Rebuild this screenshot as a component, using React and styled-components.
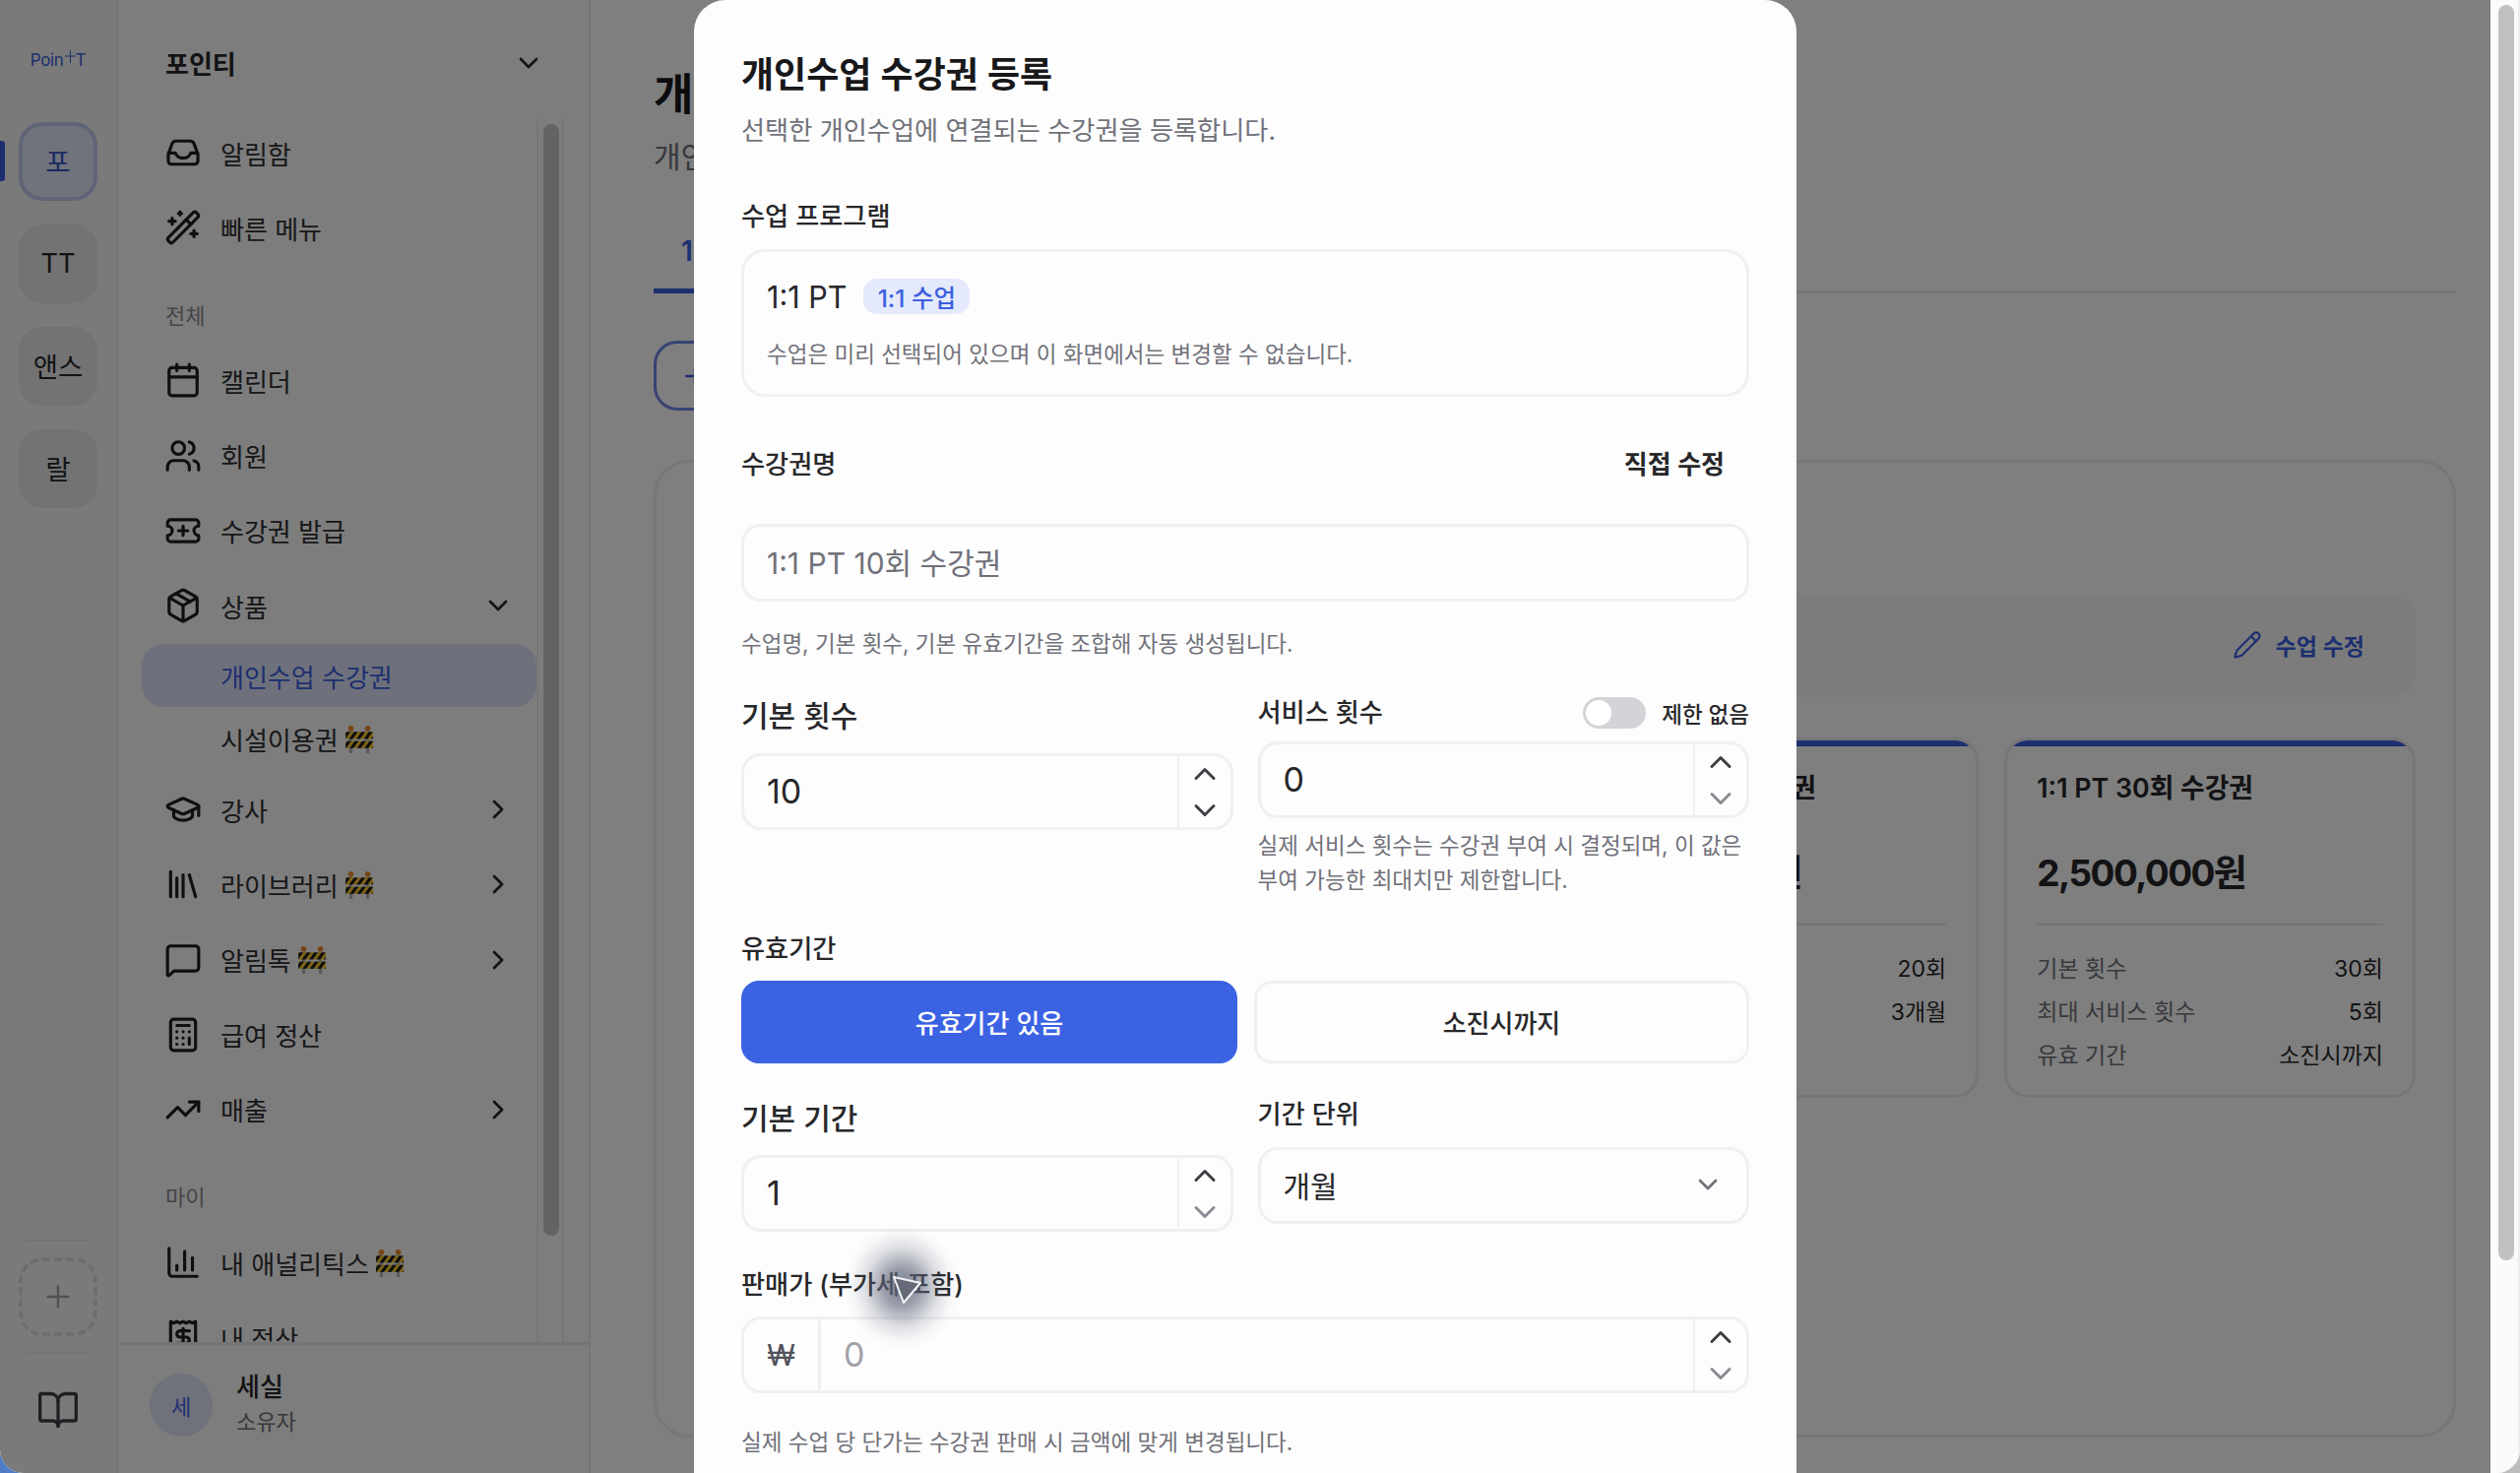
import React from "react";
import styled, { createGlobalStyle } from "styled-components";
import {
  BookOpen,
  Calculator,
  Calendar,
  ChartColumn,
  ChevronDown,
  ChevronRight,
  ChevronUp,
  GraduationCap,
  Library,
  MessageSquare,
  Package,
  Pencil,
  Plus,
  Receipt,
  TicketPlus,
  TrendingUp,
  Users,
  WandSparkles,
} from "lucide-react";

const GlobalStyle = createGlobalStyle`
  html, body {
    margin: 0;
    padding: 0;
    height: 1496px;
    overflow: hidden;
    background: linear-gradient(90deg, #4f7cc4 0 50%, #bdbdbd 50% 100%);
  }
  * { box-sizing: border-box; }
  body {
    font-family: Inter, "Noto Sans CJK KR", sans-serif;
    color: #27272a;
  }
`;

const Window = styled.div`
  position: relative;
  display: flex;
  width: 2560px;
  height: 1496px;
  overflow: hidden;
  border-radius: 0 0 24px 24px;
  background: #fff;
`;

/* rail */
const Rail = styled.div`
  width: 120px;
  flex-shrink: 0;
  background: #f4f4f5;
  border-right: 2px solid #ebebed;
  display: flex;
  flex-direction: column;
  align-items: center;
  position: relative;
`;
const Logo = styled.div`
  height: 124px;
  padding-bottom: 2px;
  display: flex;
  align-items: center;
  font-size: 17px;
  letter-spacing: -0.3px;
  color: #3b5fe0;
`;
const LogoPlus = styled.svg`
  width: 11px;
  height: 13px;
  margin: -8px 0 0 1px;
`;
const Tiles = styled.div`
  display: flex;
  flex-direction: column;
  gap: 24px;
`;
const Tile = styled.div`
  width: 80px;
  height: 80px;
  padding-bottom: 2px;
  border-radius: 24px;
  display: flex;
  align-items: center;
  justify-content: center;
  font-size: 27.5px;
  background: ${(p) => (p.$active ? "#e2e6f8" : "#e6e6e8")};
  border: ${(p) => (p.$active ? "4px solid #c1c9ee" : "none")};
  color: ${(p) => (p.$active ? "#3552c4" : "#27272a")};
`;
const RailMarker = styled.div`
  position: absolute;
  left: 0;
  top: 143px;
  width: 5px;
  height: 41px;
  background: #3b5fe0;
  border-radius: 0 3px 3px 0;
`;
const RailBottom = styled.div`
  margin-top: auto;
  display: flex;
  flex-direction: column;
  align-items: center;
`;
const RailRule = styled.div`
  width: 64px;
  height: 2px;
  background: #e6e6e8;
`;
const AddTile = styled.div`
  width: 80px;
  height: 80px;
  margin: 16px 0;
  border-radius: 24px;
  border: 4px dashed #dcdcde;
  display: flex;
  align-items: center;
  justify-content: center;
  color: #a1a1aa;
`;
const BookSlot = styled.div`
  height: 121px;
  padding-bottom: 8px;
  display: flex;
  align-items: center;
  color: #3f3f46;
`;

/* sidebar */
const Sidebar = styled.div`
  width: 480px;
  flex-shrink: 0;
  background: #fafafa;
  border-right: 2px solid #ebebed;
  display: flex;
  flex-direction: column;
  height: 100%;
`;
const SidebarHead = styled.div`
  height: 117px;
  flex-shrink: 0;
  padding: 10px 45px 0 48px;
  display: flex;
  align-items: center;
  justify-content: space-between;
  font-size: 26px;
  font-weight: 600;
`;
const SidebarBody = styled.div`
  flex: 1;
  min-height: 0;
  display: flex;
  padding-right: 25px;
`;
const MenuList = styled.div`
  flex: 1;
  min-width: 0;
  margin-left: 24px;
  overflow: hidden;
`;
const MenuItem = styled.div`
  height: 76.2px;
  display: flex;
  align-items: center;
  padding: 0 23px;
  font-size: 26px;
  color: #2f2f33;
`;
const MenuIcon = styled.span`
  width: 38px;
  height: 38px;
  margin-right: 19px;
  flex-shrink: 0;
  color: #1f1f23;
`;
const MenuLabel = styled.span`
  display: flex;
  align-items: center;
  gap: 6px;
  flex: 1;
`;
const SectionLabel = styled.div`
  font-size: 22px;
  line-height: 30px;
  color: #8a8a90;
  padding-left: 24px;
  margin: ${(p) => p.$margin};
`;
const SubList = styled.div`
  margin: 1px 0 2px;
`;
const SubItem = styled.div`
  height: 64px;
  display: flex;
  align-items: center;
  gap: 6px;
  padding-left: 80px;
  font-size: 26px;
  border-radius: 22px;
  background: ${(p) => (p.$active ? "#dde2f8" : "transparent")};
  color: ${(p) => (p.$active ? "#3b5fe0" : "#2f2f33")};
`;
const Track = styled.div`
  width: 28px;
  flex-shrink: 0;
  margin-top: 3px;
  padding: 6px 5px 0;
  border-left: 2px solid #efeff0;
  border-right: 2px solid #efeff0;
`;
const Thumb = styled.div`
  height: 1129px;
  width: 16px;
  border-radius: 8px;
  background: #c6c6c6;
`;
const SidebarFoot = styled.div`
  height: 133px;
  flex-shrink: 0;
  border-top: 3px solid #e8e8ea;
  padding: 0 0 8px 32px;
  display: flex;
  align-items: center;
  gap: 24px;
`;
const Avatar = styled.div`
  width: 64px;
  height: 64px;
  border-radius: 50%;
  background: #dfe3f6;
  color: #3b5fe0;
  display: flex;
  align-items: center;
  justify-content: center;
  font-size: 22px;
`;
const UserName = styled.div`
  font-size: 26px;
  line-height: 36px;
  font-weight: 500;
  margin-top: -2px;
`;
const UserRole = styled.div`
  font-size: 22px;
  line-height: 34px;
  color: #71717a;
`;

/* page behind the dialog */
const Main = styled.div`
  flex: 1;
  min-width: 0;
  padding: 66px 35px 0 64px;
  background: #fff;
`;
const PageTitle = styled.div`
  font-size: 44px;
  line-height: 60px;
  font-weight: 700;
  color: #18181b;
`;
const PageSub = styled.div`
  margin-top: 13px;
  font-size: 30px;
  line-height: 40px;
  color: #71717a;
`;
const Tabs = styled.div`
  margin-top: 39px;
  height: 80px;
  border-bottom: 3px solid #eeeeef;
  display: flex;
`;
const Tab = styled.div`
  height: 80px;
  padding: 0 32px 6px 28px;
  border-bottom: 5px solid #3b5fe0;
  display: flex;
  align-items: center;
  font-size: 28px;
  font-weight: 600;
  color: #3b5fe0;
`;
const AddButton = styled.div`
  margin-top: 48px;
  width: 240px;
  height: 71px;
  border: 3px solid #6d86e8;
  border-radius: 24px;
  padding-left: 24px;
  display: flex;
  align-items: center;
  gap: 10px;
  font-size: 26px;
  color: #3b5fe0;
`;
const ProgramCard = styled.div`
  margin-top: 50px;
  height: 993px;
  border: 3px solid #eeeeef;
  border-radius: 36px;
  padding: 134px 38px 0;
`;
const ProgramBar = styled.div`
  height: 104px;
  border-radius: 24px;
  background: #f9f9f9;
  padding: 0 52px 2px 0;
  display: flex;
  align-items: center;
  justify-content: flex-end;
  gap: 14px;
  font-size: 23px;
  font-weight: 600;
  color: #3b5fe0;
`;
const PassGrid = styled.div`
  margin-top: 41px;
  display: grid;
  grid-template-columns: repeat(4, 1fr);
  gap: 26px;
`;
const PassCard = styled.div`
  height: 366px;
  border: 3px solid #ededef;
  border-radius: 24px;
  overflow: hidden;
  padding: 0 30px;
  position: relative;
  &::before {
    content: "";
    position: absolute;
    left: 0;
    right: 0;
    top: 0;
    height: 6px;
    background: #3b5fe0;
  }
`;
const PassName = styled.div`
  margin-top: 30px;
  font-size: 26.8px;
  line-height: 36px;
  font-weight: 600;
  white-space: nowrap;
`;
const PassPrice = styled.div`
  margin-top: 43px;
  font-size: 37px;
  line-height: 52px;
  font-weight: 700;
  letter-spacing: -1.6px;
  white-space: nowrap;
`;
const PassDivider = styled.div`
  margin-top: 25px;
  height: 2px;
  background: #e8e8ea;
`;
const PassRows = styled.div`
  margin-top: 20px;
`;
const PassRow = styled.div`
  height: 44px;
  display: flex;
  align-items: center;
  justify-content: space-between;
  font-size: 23px;
`;
const PassKey = styled.span`
  color: #71717a;
`;

const PageScroll = styled.div`
  width: 30px;
  flex-shrink: 0;
  background: #fafafa;
  padding: 5px 6px 0 8px;
  border-left: 2px solid #fff;
  border-right: 2px solid #ececec;
  position: relative;
  z-index: 5;
`;
const PageThumb = styled.div`
  height: 1275px;
  width: 16px;
  margin-left: -2px;
  border-radius: 8px;
  background: #c1c1c1;
`;

/* dialog */
const Dim = styled.div`
  position: absolute;
  left: 0;
  top: 0;
  bottom: 0;
  right: 30px;
  background: rgba(0, 0, 0, 0.5);
`;
const Modal = styled.div`
  position: absolute;
  left: 705px;
  top: 0;
  width: 1120px;
  height: 1600px;
  background: #fdfdfd;
  border-radius: 32px 32px 0 0;
  padding: 51px 48px 0;
`;
const ModalTitle = styled.div`
  font-size: 36px;
  line-height: 50px;
  font-weight: 600;
  color: #18181b;
`;
const ModalSub = styled.div`
  margin-top: 14px;
  font-size: 26.2px;
  line-height: 36px;
  color: #71717a;
`;
const Label = styled.div`
  font-size: ${(p) => (p.$large ? "30px" : "26.2px")};
  line-height: ${(p) => p.$lh || "36px"};
  font-weight: 500;
  color: #27272a;
  margin-top: ${(p) => p.$top || "0"};
`;
const ProgramBox = styled.div`
  margin-top: 15px;
  height: 150px;
  border: 3px solid #f0f0f4;
  border-radius: 24px;
  padding: 27px 23px 0;
`;
const ProgramRow = styled.div`
  height: 36px;
  display: flex;
  align-items: center;
  gap: 17px;
  font-size: 30.5px;
`;
const Badge = styled.span`
  width: 108px;
  height: 36px;
  border-radius: 14px;
  background: #e4e9fb;
  color: #3b5fe0;
  font-size: 24.5px;
  font-weight: 500;
  display: flex;
  align-items: center;
  justify-content: center;
`;
const Hint = styled.div`
  margin-top: ${(p) => p.$top || "0"};
  font-size: 22.5px;
  line-height: ${(p) => p.$lh || "34px"};
  color: #71717a;
`;
const NameRow = styled.div`
  margin-top: 51px;
  display: flex;
  justify-content: space-between;
  padding-right: 25px;
`;
const LinkText = styled.span`
  font-size: 26px;
  line-height: 36px;
  font-weight: 600;
`;
const TextBox = styled.div`
  margin-top: ${(p) => p.$top || "0"};
  height: ${(p) => p.$h || "78px"};
  border: 3px solid #f0f0f4;
  border-radius: 20px;
  padding: 0 23px 3px;
  display: flex;
  align-items: center;
  justify-content: space-between;
  font-size: 30px;
  color: ${(p) => p.$color || "#27272a"};
`;
const Columns = styled.div`
  margin-top: ${(p) => p.$top};
  display: grid;
  grid-template-columns: 1fr 1fr;
  column-gap: 25px;
  align-items: start;
`;
const ToggleRow = styled.div`
  height: 34px;
  display: flex;
  align-items: center;
  justify-content: space-between;
`;
const ToggleWrap = styled.div`
  display: flex;
  align-items: center;
  gap: 16px;
  font-size: 22.5px;
  font-weight: 500;
`;
const Toggle = styled.div`
  width: 64px;
  height: 32px;
  border-radius: 16px;
  background: #d4d4d8;
  padding: 3px;
`;
const Knob = styled.div`
  width: 26px;
  height: 26px;
  border-radius: 50%;
  background: #fff;
`;
const NumberBox = styled.div`
  margin-top: ${(p) => p.$top};
  height: 78px;
  border: 3px solid #f0f0f4;
  border-radius: 20px;
  display: flex;
  overflow: hidden;
`;
const CurrencyCell = styled.div`
  width: 78px;
  flex-shrink: 0;
  border-right: 3px solid #f0f0f4;
  display: flex;
  align-items: center;
  justify-content: center;
  font-size: 30px;
  color: #52525b;
`;
const NumberValue = styled.div`
  flex: 1;
  min-width: 0;
  padding: 0 0 2px 23px;
  display: flex;
  align-items: center;
  font-size: 34px;
  color: ${(p) => (p.$placeholder ? "#a1a1aa" : "#27272a")};
`;
const Stepper = styled.div`
  width: 54px;
  flex-shrink: 0;
  border-left: 2px solid #f0f0f4;
  display: flex;
  flex-direction: column;
  align-items: center;
  justify-content: center;
  gap: 1px;
`;
const StepIcon = styled.span`
  height: 36px;
  color: ${(p) => (p.$muted ? "#8b8b93" : "#3f3f46")};
`;
const ChoiceRow = styled.div`
  margin-top: 14px;
  display: grid;
  grid-template-columns: 504px 1fr;
  gap: 17px;
`;
const Choice = styled.div`
  height: 84px;
  padding-bottom: 2px;
  border-radius: 18px;
  display: flex;
  align-items: center;
  justify-content: center;
  font-size: 26px;
  font-weight: 500;
  background: ${(p) => (p.$on ? "#3b62e3" : "#fdfdfd")};
  color: ${(p) => (p.$on ? "#fff" : "#27272a")};
  border: ${(p) => (p.$on ? "none" : "3px solid #f0f0f4")};
`;
const SelectArrow = styled.span`
  height: 32px;
  color: #71717a;
`;
const CursorHalo = styled.div`
  position: absolute;
  left: 151px;
  top: 1242px;
  width: 120px;
  height: 130px;
  border-radius: 50%;
  background: radial-gradient(closest-side, rgba(95, 102, 122, 0.85) 0%, rgba(95, 102, 122, 0.62) 30%, rgba(95, 102, 122, 0.2) 62%, rgba(95, 102, 122, 0.04) 85%, rgba(95, 102, 122, 0) 100%);
`;
const CursorArrow = styled.svg`
  position: absolute;
  left: 200px;
  top: 1292px;
  width: 34px;
  height: 34px;
`;

const Barrier = () => (
  <svg width="30" height="29" viewBox="0 0 28 28" preserveAspectRatio="none">
    <defs>
      <pattern id="hazard" width="7" height="7" patternUnits="userSpaceOnUse" patternTransform="skewX(-35)">
        <rect width="7" height="7" fill="#f6c52c" />
        <rect width="3.5" height="7" fill="#1c1c1c" />
      </pattern>
    </defs>
    <rect x="4.5" y="6" width="3" height="22" fill="#b4b4b4" />
    <rect x="20.5" y="6" width="3" height="22" fill="#b4b4b4" />
    <circle cx="6" cy="3.5" r="2.6" fill="#ef8a24" />
    <circle cx="22" cy="3.5" r="2.6" fill="#ef8a24" />
    <rect x="1" y="7" width="26" height="7" fill="url(#hazard)" />
    <rect x="1" y="16" width="26" height="7" fill="url(#hazard)" />
  </svg>
);

const InboxIcon = (props) => (
  <svg viewBox="0 0 24 24" fill="none" stroke="currentColor" strokeWidth="2" strokeLinecap="round" strokeLinejoin="round" {...props}>
    <path d="M2.5 13 5 6.2A2.5 2.5 0 0 1 7.3 4.6h9.4A2.5 2.5 0 0 1 19 6.2l2.5 6.8v4.4a2 2 0 0 1-2 2h-15a2 2 0 0 1-2-2z" />
    <path d="M2.7 12.2H7c.8 2.2 2.5 3.3 5 3.3s4.2-1.1 5-3.3h4.3" />
  </svg>
);

const Item = ({ icon: Icon, label, barrier, arrow }) => (
  <MenuItem>
    <MenuIcon>
      <Icon size={38} width={38} height={38} />
    </MenuIcon>
    <MenuLabel>
      {label}
      {barrier && <Barrier />}
    </MenuLabel>
    {arrow === "right" && <ChevronRight size={32} color="#27272a" />}
    {arrow === "down" && <ChevronDown size={32} color="#27272a" />}
  </MenuItem>
);

const Pass = ({ name, price, rows }) => (
  <PassCard>
    <PassName>{name}</PassName>
    <PassPrice>{price}</PassPrice>
    <PassDivider />
    <PassRows>
      {rows.map(([k, v]) => (
        <PassRow key={k}>
          <PassKey>{k}</PassKey>
          <span>{v}</span>
        </PassRow>
      ))}
    </PassRows>
  </PassCard>
);

const NumberField = ({ value, placeholder, top, currency, mutedDown }) => (
  <NumberBox $top={top}>
    {currency && <CurrencyCell>₩</CurrencyCell>}
    <NumberValue $placeholder={placeholder}>{value}</NumberValue>
    <Stepper>
      <StepIcon>
        <ChevronUp size={36} />
      </StepIcon>
      <StepIcon $muted={mutedDown}>
        <ChevronDown size={36} />
      </StepIcon>
    </Stepper>
  </NumberBox>
);

function App() {
  return (
    <>
      <GlobalStyle />
      <Window>
        <Rail>
          <RailMarker />
          <Logo>
            Poin
            <LogoPlus viewBox="0 0 11 13">
              <path d="M5.5 0v13M0 6h11" stroke="#3b5fe0" strokeWidth="1" />
            </LogoPlus>
            T
          </Logo>
          <Tiles>
            <Tile $active>포</Tile>
            <Tile>TT</Tile>
            <Tile>앤스</Tile>
            <Tile>랄</Tile>
          </Tiles>
          <RailBottom>
            <RailRule />
            <AddTile>
              <Plus size={36} strokeWidth={1.6} />
            </AddTile>
            <RailRule />
            <BookSlot>
              <BookOpen size={44} strokeWidth={1.8} />
            </BookSlot>
          </RailBottom>
        </Rail>

        <Sidebar>
          <SidebarHead>
            포인티
            <ChevronDown size={32} color="#27272a" />
          </SidebarHead>
          <SidebarBody>
            <MenuList>
              <Item icon={InboxIcon} label="알림함" />
              <Item icon={WandSparkles} label="빠른 메뉴" />
              <SectionLabel $margin="37px 0 12px">전체</SectionLabel>
              <Item icon={Calendar} label="캘린더" />
              <Item icon={Users} label="회원" />
              <Item icon={TicketPlus} label="수강권 발급" />
              <Item icon={Package} label="상품" arrow="down" />
              <SubList>
                <SubItem $active>개인수업 수강권</SubItem>
                <SubItem>
                  시설이용권 <Barrier />
                </SubItem>
              </SubList>
              <Item icon={GraduationCap} label="강사" arrow="right" />
              <Item icon={Library} label="라이브러리" barrier arrow="right" />
              <Item icon={MessageSquare} label="알림톡" barrier arrow="right" />
              <Item icon={Calculator} label="급여 정산" />
              <Item icon={TrendingUp} label="매출" arrow="right" />
              <SectionLabel $margin="36px 0 13px">마이</SectionLabel>
              <Item icon={ChartColumn} label="내 애널리틱스" barrier />
              <Item icon={Receipt} label="내 정산" />
            </MenuList>
            <Track>
              <Thumb />
            </Track>
          </SidebarBody>
          <SidebarFoot>
            <Avatar>세</Avatar>
            <div>
              <UserName>세실</UserName>
              <UserRole>소유자</UserRole>
            </div>
          </SidebarFoot>
        </Sidebar>

        <Main>
          <PageTitle>개인수업 수강권</PageTitle>
          <PageSub>개인수업에 연결되는 수강권을 관리합니다.</PageSub>
          <Tabs>
            <Tab>1:1 수업</Tab>
          </Tabs>
          <AddButton>
            <Plus size={30} />
            수업 추가
          </AddButton>
          <ProgramCard>
            <ProgramBar>
              <Pencil size={30} strokeWidth={1.8} />
              수업 수정
            </ProgramBar>
            <PassGrid>
              <Pass
                name="1:1 PT 1회 수강권"
                price="100,000원"
                rows={[
                  ["기본 횟수", "1회"],
                  ["유효 기간", "1개월"],
                ]}
              />
              <Pass
                name="1:1 PT 10회 수강권"
                price="900,000원"
                rows={[
                  ["기본 횟수", "10회"],
                  ["유효 기간", "2개월"],
                ]}
              />
              <Pass
                name="1:1 PT 20회 수강권"
                price="1,800,000원"
                rows={[
                  ["기본 횟수", "20회"],
                  ["유효 기간", "3개월"],
                ]}
              />
              <Pass
                name="1:1 PT 30회 수강권"
                price="2,500,000원"
                rows={[
                  ["기본 횟수", "30회"],
                  ["최대 서비스 횟수", "5회"],
                  ["유효 기간", "소진시까지"],
                ]}
              />
            </PassGrid>
          </ProgramCard>
        </Main>

        <PageScroll>
          <PageThumb />
        </PageScroll>

        <Dim />

        <Modal>
          <ModalTitle>개인수업 수강권 등록</ModalTitle>
          <ModalSub>선택한 개인수업에 연결되는 수강권을 등록합니다.</ModalSub>

          <Label $top="51px">수업 프로그램</Label>
          <ProgramBox>
            <ProgramRow>
              1:1 PT
              <Badge>1:1 수업</Badge>
            </ProgramRow>
            <Hint $top="24px">수업은 미리 선택되어 있으며 이 화면에서는 변경할 수 없습니다.</Hint>
          </ProgramBox>

          <NameRow>
            <Label>수강권명</Label>
            <LinkText>직접 수정</LinkText>
          </NameRow>
          <TextBox $top="42px" $h="79px" $color="#71717a">
            1:1 PT 10회 수강권
          </TextBox>
          <Hint $top="26px">수업명, 기본 횟수, 기본 유효기간을 조합해 자동 생성됩니다.</Hint>

          <Columns $top="36px">
            <div>
              <Label $large $lh="40px">
                기본 횟수
              </Label>
              <NumberField value="10" top="18px" />
            </div>
            <div>
              <ToggleRow>
                <Label>서비스 횟수</Label>
                <ToggleWrap>
                  <Toggle>
                    <Knob />
                  </Toggle>
                  제한 없음
                </ToggleWrap>
              </ToggleRow>
              <NumberField value="0" top="12px" mutedDown />
              <Hint $top="10px" $lh="35px">
                실제 서비스 횟수는 수강권 부여 시 결정되며, 이 값은 부여 가능한 최대치만 제한합니다.
              </Hint>
            </div>
          </Columns>

          <Label $top="35px">유효기간</Label>
          <ChoiceRow>
            <Choice $on>유효기간 있음</Choice>
            <Choice>소진시까지</Choice>
          </ChoiceRow>

          <Columns $top="36px">
            <div>
              <Label $large $lh="40px">
                기본 기간
              </Label>
              <NumberField value="1" top="17px" mutedDown />
            </div>
            <div>
              <Label $lh="32px">기간 단위</Label>
              <TextBox $top="17px">
                개월
                <SelectArrow>
                  <ChevronDown size={32} />
                </SelectArrow>
              </TextBox>
            </div>
          </Columns>

          <Label $top="36px">판매가 (부가세 포함)</Label>
          <NumberField value="0" placeholder currency top="14px" mutedDown />
          <Hint $top="33px">실제 수업 당 단가는 수강권 판매 시 금액에 맞게 변경됩니다.</Hint>

          <CursorHalo />
          <CursorArrow viewBox="0 0 34 34">
            <path d="M3 5 30 11 13 31z" fill="#646a78" stroke="#f4f4f6" strokeWidth="2" strokeLinejoin="round" />
          </CursorArrow>
        </Modal>
      </Window>
    </>
  );
}

export default App;
